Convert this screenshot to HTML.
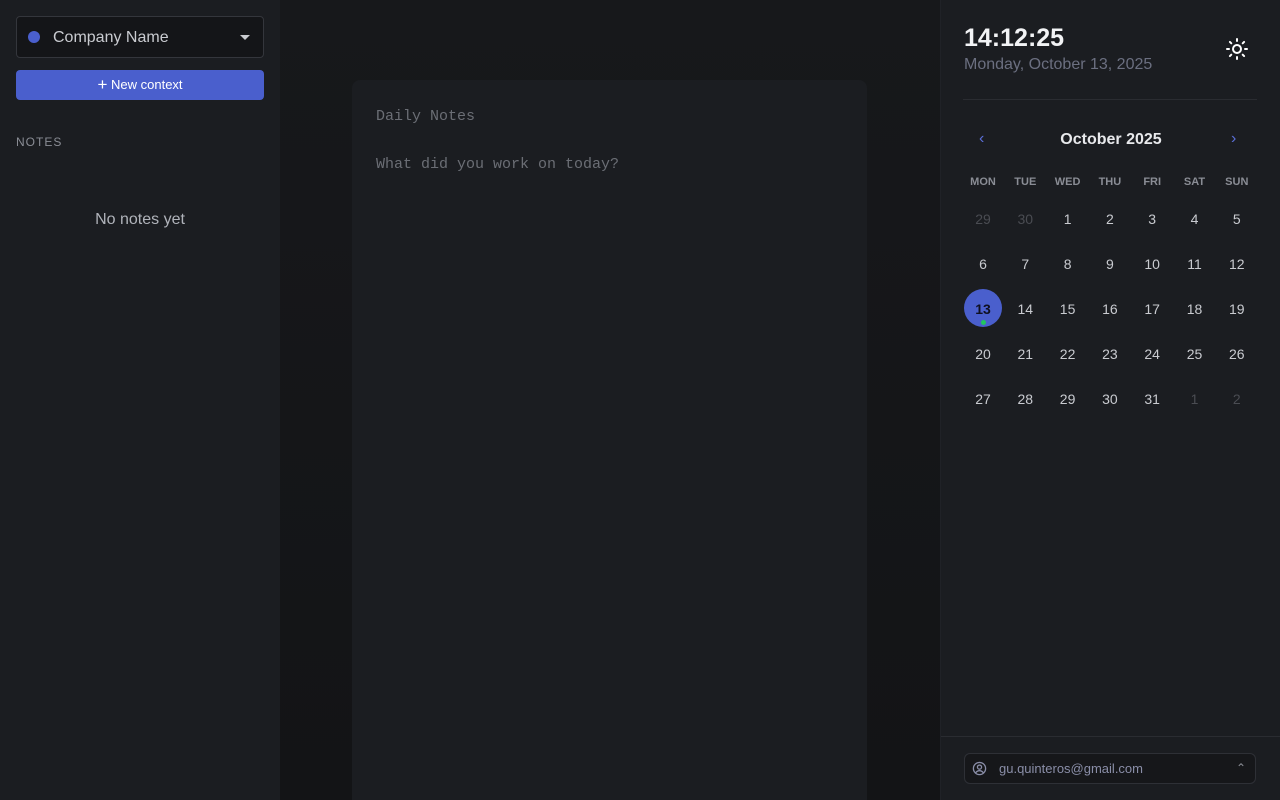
<!DOCTYPE html>
<html><head><style>
*{box-sizing:border-box;margin:0;padding:0}
body{width:1280px;height:800px;overflow:hidden;background:#141518;font-family:"Liberation Sans",sans-serif;position:relative}
.left{position:absolute;left:0;top:0;width:280px;height:800px;background:#1b1d21}
.mid{position:absolute;left:280px;top:0;width:660px;height:800px;background:linear-gradient(180deg,#17181b,#131416)}
.card{position:absolute;left:352px;top:80px;width:515px;height:720px;background:#1b1d21;border-radius:8px 8px 0 0}
.right{position:absolute;left:940px;top:0;width:340px;height:800px;background:#1b1d21;border-left:1px solid #202227}
.sel{position:absolute;left:16px;top:16px;width:248px;height:42px;border:1px solid #34363c;border-radius:4px;background:#141518}
.btn{position:absolute;left:16px;top:70px;width:248px;height:30px;background:#4a5fcd;border-radius:4px;color:#fff;font-size:13px;text-align:center;line-height:30px}
.mono{font-family:"Liberation Mono",monospace;color:#6b6e75;font-size:15px;position:absolute;left:376px}
.cal div{position:absolute;width:42px;text-align:center;font-size:14px;color:#c9cbd0}
.cal .h{font-size:11px;color:#8a8d95;font-weight:bold}
.cal .o{color:#4a4c52}
</style></head><body>
<div class="left">
<div class="sel"><span style="position:absolute;left:11px;top:14px;width:12px;height:12px;border-radius:50%;background:#4a5fcd"></span><span style="position:absolute;left:36px;top:12px;font-size:16px;color:#c9cbd0">Company Name</span><span style="position:absolute;right:13px;top:18px;border-left:5px solid transparent;border-right:5px solid transparent;border-top:5px solid #c9cbd0"></span></div>
<div class="btn"><span style="font-size:17px;vertical-align:-1px">+</span> New context</div>
<div style="position:absolute;left:16px;top:135px;font-size:12px;color:#8a8d95;letter-spacing:1px">NOTES</div>
<div style="position:absolute;left:0;width:280px;top:211px;text-align:center;font-size:16px;color:#b0b3ba">No notes yet</div>
</div>
<div class="mid"></div>
<div class="card"></div>
<div class="mono" style="top:108px">Daily Notes</div>
<div class="mono" style="top:156px">What did you work on today?</div>
<div class="right">
<div style="position:absolute;left:23px;top:24px;font-size:25px;font-weight:bold;color:#f2f3f5">14:12:25</div>
<div style="position:absolute;left:23px;top:56px;font-size:16px;color:#6b6f80">Monday, October 13, 2025</div>
<svg style="position:absolute;left:284px;top:37px" width="24" height="24" viewBox="0 0 24 24" fill="none" stroke="#fff" stroke-width="2" stroke-linecap="round"><circle cx="12" cy="12" r="4"/><path d="M12 2v2M12 20v2M4.9 4.9l1.4 1.4M17.7 17.7l1.4 1.4M2 12h2M20 12h2M4.9 19.1l1.4-1.4M17.7 6.3l1.4-1.4"/></svg>
<div style="position:absolute;left:22px;top:99px;width:294px;height:1px;background:#2a2c31"></div>
<div style="position:absolute;left:38px;top:130px;color:#5b6fd8;font-size:16px">‹</div>
<div style="position:absolute;left:290px;top:130px;color:#5b6fd8;font-size:16px">›</div>
<div style="position:absolute;left:0;width:340px;top:131px;text-align:center;font-size:16px;font-weight:bold;color:#e8e9ec">October 2025</div>
<div style="position:absolute;left:23px;top:289px;width:38px;height:38px;border-radius:50%;background:#4a5fcd"></div>
<div style="position:absolute;left:40px;top:320px;width:5px;height:5px;border-radius:50%;background:#22c55e"></div>
<div class="cal" id="cal"></div>
<div style="position:absolute;left:0;top:736px;width:340px;height:1px;background:#2a2c31"></div>
<div style="position:absolute;left:23px;top:753px;width:292px;height:31px;border:1px solid #2e3036;border-radius:6px;background:#16171a">
<svg style="position:absolute;left:7px;top:7px" width="15" height="15" viewBox="0 0 16 16" fill="none" stroke="#8a8ea8" stroke-width="1.4"><circle cx="8" cy="8" r="6.5"/><circle cx="8" cy="6.5" r="2.2"/><path d="M4 12.5c1-1.6 2.3-2.2 4-2.2s3 .6 4 2.2"/></svg>
<span style="position:absolute;left:34px;top:7px;font-size:13px;color:#8a8ea8">gu.quinteros@gmail.com</span>
<span style="position:absolute;right:9px;top:7px;font-size:12px;color:#8a8d95">⌃</span>
</div>
</div>
<script>
var c=document.getElementById('cal'),h=['MON','TUE','WED','THU','FRI','SAT','SUN'],s='';
h.forEach(function(t,i){s+='<div class="h" style="left:'+(21+i*42.3)+'px;top:176px">'+t+'</div>'});
var d=[29,30];for(var i=1;i<=31;i++)d.push(i);d.push(1,2);
d.forEach(function(n,k){var r=Math.floor(k/7),col=k%7,o=(k<2||k>32)?' o':'';var st=(n==13&&k==14)?';color:#0f1020;font-weight:bold':'';
s+='<div class="'+o+'" style="left:'+(21+col*42.3)+'px;top:'+(211+r*45)+'px'+st+'">'+n+'</div>'});
c.innerHTML=s;
</script>
</body></html>
